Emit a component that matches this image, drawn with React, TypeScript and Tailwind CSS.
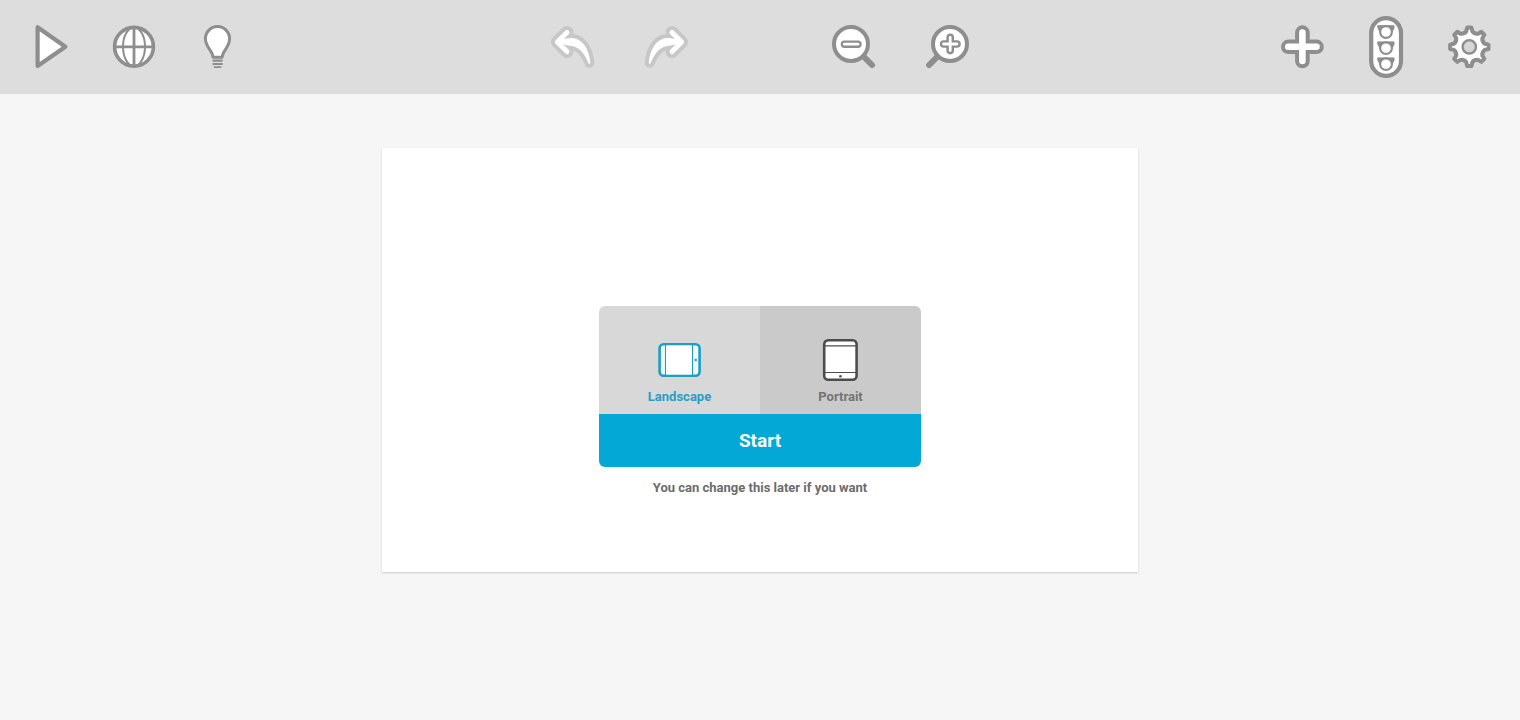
import { useState } from "react";
import type { ReactNode } from "react";

const GRAY = "#8e8e8e";

function ToolButton({ label, disabled, wide, children }: { label: string; disabled?: boolean; wide?: boolean; children: ReactNode }) {
  return (
    <button
      type="button"
      aria-label={label}
      disabled={disabled}
      className={`flex h-16 shrink-0 items-center justify-center ${wide ? "w-[94px]" : "w-[84px]"}`}
    >
      <svg viewBox="0 0 64 64" className="size-16" fill="none" strokeLinecap="round" strokeLinejoin="round" aria-hidden="true">
        {children}
      </svg>
    </button>
  );
}

function CurvedArrow() {
  const head = "M27 17.4 L17.4 27 L27 36.6";
  const shaft = "M18.4 26.8 C24 24.3 28 23.5 33 24 C42 25.4 48 34.4 49.3 47.8 C44.5 35.4 38.4 30 28.4 29.5 L18.4 27.2 Z";
  return (
    <>
      <g stroke="#c7c7c7" fill="#c7c7c7">
        <path d={head} strokeWidth="12.8" />
        <path d={shaft} strokeWidth="10" />
      </g>
      <path d={head} stroke="#fff" strokeWidth="5" />
      <path d={shaft} stroke="#fff" strokeWidth="2" fill="#fff" />
    </>
  );
}

const gearPath = (() => {
  const at = (deg: number, r: number) => {
    const a = (deg * Math.PI) / 180;
    return `${(31.3 + r * Math.cos(a)).toFixed(2)} ${(31.8 + r * Math.sin(a)).toFixed(2)}`;
  };
  let d = `M${at(-6.5, 19.3)}`;
  for (let i = 0; i < 8; i++) {
    const c = i * 45;
    d += `L${at(c + 6.5, 19.3)}L${at(c + 11, 15.8)}Q${at(c + 22.5, 13.6)} ${at(c + 34, 15.8)}L${at(c + 38.5, 19.3)}`;
  }
  return `${d}Z`;
})();

function Toolbar() {
  return (
    <header className="flex h-[94px] items-center justify-between bg-[#dddddd] px-2">
      <div className="flex flex-1">
        <ToolButton label="Play">
          <path d="M19.6 12.3V51L47.4 31.8Z" fill="#fff" stroke={GRAY} strokeWidth="4.2" />
        </ToolButton>
        <ToolButton label="Language">
          <circle cx="32" cy="31.8" r="19.4" fill="#fff" />
          <ellipse cx="32" cy="31.8" rx="11" ry="19.4" stroke={GRAY} strokeWidth="2" />
          <path d="M32 12.2V51M13 31.8H51.2" stroke={GRAY} strokeWidth="2.8" />
          <circle cx="32" cy="31.8" r="19.4" stroke={GRAY} strokeWidth="3.6" />
        </ToolButton>
        <ToolButton label="Hints">
          <path
            d="M27 42.2C26.8 35.5 19.4 32.5 19.4 23.8A12.1 12.2 0 0 1 43.6 23.8C43.6 32.5 36.4 35.5 36.2 42.2Z"
            fill="#fff"
            stroke={GRAY}
            strokeWidth="3"
          />
          <path d="M27.4 45.6H35.8M27.4 49H35.8" stroke={GRAY} strokeWidth="2.2" />
          <path d="M28.6 52.2H34.6" stroke={GRAY} strokeWidth="1.8" />
        </ToolButton>
      </div>

      <div className="flex gap-[94px]">
        <div className="flex">
          <ToolButton label="Undo" wide disabled>
            <CurvedArrow />
          </ToolButton>
          <ToolButton label="Redo" wide disabled>
            <g transform="matrix(-1 0 0 1 65 0)">
              <CurvedArrow />
            </g>
          </ToolButton>
        </div>
        <div className="flex">
          <ToolButton label="Zoom out" wide>
            <path d="M42 42L50 50" stroke={GRAY} strokeWidth="6" />
            <circle cx="29" cy="29" r="17" fill="#fff" stroke={GRAY} strokeWidth="4" />
            <path d="M22.4 29.2H36" stroke={GRAY} strokeWidth="7.4" />
            <path d="M22.4 29.2H36" stroke="#fff" strokeWidth="2.8" />
          </ToolButton>
          <ToolButton label="Zoom in" wide>
            <path d="M21 42L13.2 50" stroke={GRAY} strokeWidth="6" />
            <circle cx="34" cy="29" r="17" fill="#fff" stroke={GRAY} strokeWidth="4" />
            <path d="M27.6 29H41M34.2 22.4V35.6" stroke={GRAY} strokeWidth="7.6" />
            <path d="M27.6 29H41M34.2 22.4V35.6" stroke="#fff" strokeWidth="2.8" />
          </ToolButton>
        </div>
      </div>

      <div className="flex flex-1 justify-end">
        <ToolButton label="Add">
          <path d="M18.3 31.8H46.5M32.4 17.6V46" stroke={GRAY} strokeWidth="14.6" />
          <path d="M18.3 31.8H46.5M32.4 17.6V46" stroke="#fff" strokeWidth="6.6" />
        </ToolButton>
        <ToolButton label="Scenes">
          <rect x="17.2" y="3.2" width="29.8" height="57.6" rx="14.9" fill="#fff" stroke={GRAY} strokeWidth="4.2" />
          {[17, 33.2, 49.2].map((cy) => (
            <g key={cy} transform={`translate(32 ${cy})`}>
              <path d="M-8 -6.3H8V-4L5.6 1H-5.6L-8 -4Z" fill={GRAY} stroke={GRAY} strokeWidth="1" />
              <circle r="6.9" fill={GRAY} />
              <circle r="4.8" fill="#fff" />
            </g>
          ))}
        </ToolButton>
        <ToolButton label="Settings">
          <path d={gearPath} fill="#fff" stroke={GRAY} strokeWidth="4" />
          <circle cx="31.3" cy="31.8" r="6.7" fill="#d6d6d6" stroke={GRAY} strokeWidth="2.4" />
        </ToolButton>
      </div>
    </header>
  );
}

function LandscapeIcon() {
  return (
    <svg viewBox="0 0 44 44" className="size-11" fill="none" stroke="#1b9dc4" aria-hidden="true">
      <rect x="1.6" y="6.2" width="40" height="31.6" rx="4" fill="#f4fdff" strokeWidth="2.6" />
      <rect x="8" y="7.5" width="26" height="29" fill="#fff" stroke="none" />
      <path d="M7.5 7V37M34.5 7V37" strokeWidth="1.1" />
      <circle cx="37.8" cy="22" r="1.2" fill="#1b9dc4" stroke="none" />
    </svg>
  );
}

function PortraitIcon() {
  return (
    <svg viewBox="0 0 44 44" className="size-11" fill="none" stroke="#4c4c4c" aria-hidden="true">
      <rect x="5.2" y="2.2" width="32.4" height="39.6" rx="4" fill="#fff" strokeWidth="2.6" />
      <path d="M6 7.8H37M6 34.5H37" strokeWidth="1.2" />
      <circle cx="21.4" cy="38.2" r="1.3" fill="#4c4c4c" stroke="none" />
    </svg>
  );
}

export default function App() {
  const [orientation, setOrientation] = useState("landscape");
  return (
    <div className="min-h-screen bg-[#f6f6f6] font-[Roboto,sans-serif]">
      <Toolbar />
      <main className="flex justify-center px-4 pt-[54px]">
        <form
          className="flex min-h-[424px] w-full max-w-[756px] flex-col items-center bg-white px-4 pt-[158px] shadow-[0_1px_2px_rgba(0,0,0,0.18)]"
          onSubmit={(e) => e.preventDefault()}
        >
          <div className="w-full max-w-[322px] overflow-hidden rounded-md">
            <div className="grid grid-cols-2" role="radiogroup" aria-label="Orientation">
              <label className="relative flex h-[108px] flex-col items-center gap-[7px] bg-[#d8d8d8] pt-8 text-[13px]/4 font-bold text-[#2a9dc6]">
                <input
                  type="radio"
                  name="orientation"
                  className="sr-only"
                  checked={orientation === "landscape"}
                  onChange={() => setOrientation("landscape")}
                />
                <LandscapeIcon />
                Landscape
              </label>
              <label className="relative flex h-[108px] flex-col items-center gap-[7px] bg-[#cacaca] pt-8 text-[13px]/4 font-bold text-[#747474]">
                <input
                  type="radio"
                  name="orientation"
                  className="sr-only"
                  checked={orientation === "portrait"}
                  onChange={() => setOrientation("portrait")}
                />
                <PortraitIcon />
                Portrait
              </label>
            </div>
            <button type="submit" className="h-[53px] w-full bg-[#03a8d6] pt-0.5 text-[19px] font-bold text-white">
              Start
            </button>
          </div>
          <p className="mt-[13px] text-[13px]/4 font-bold text-[#6c6c6c]">You can change this later if you want</p>
        </form>
      </main>
    </div>
  );
}
